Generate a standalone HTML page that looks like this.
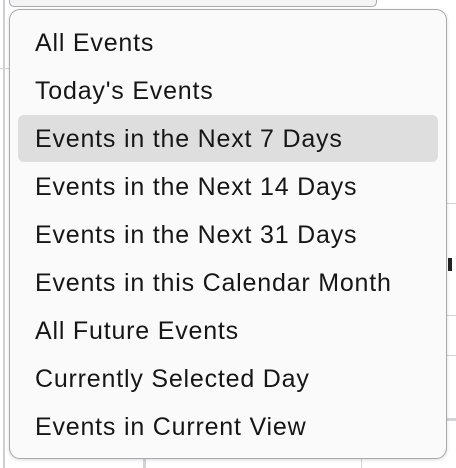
<!DOCTYPE html>
<html><head><meta charset="utf-8"><style>
html,body{margin:0;padding:0;width:456px;height:468px;overflow:hidden;background:#fff;font-family:"Liberation Sans",sans-serif;}
.bg{position:absolute;background:#d4d4d6;}
.menu{position:absolute;left:9px;top:9px;width:436px;height:448px;border:1px solid #a9a9ae;border-radius:11px;background:#fafafa;box-shadow:0 1px 3px rgba(0,0,0,.15);}
.item{position:absolute;left:8px;width:420px;height:47px;line-height:48px;padding-left:17px;box-sizing:border-box;font-size:25px;letter-spacing:0.8px;color:#161616;border-radius:6px;white-space:nowrap;}
.sel{background:#dedede;}
</style></head><body>
<div style="position:absolute;left:9px;top:-6px;width:366px;height:11px;border:1px solid #a9a9ae;border-radius:5px;background:#f4f4f4"></div>
<div class="bg" style="left:3px;top:0;width:2px;height:468px;background:#cfcfd2"></div>
<div class="bg" style="left:0;top:68px;width:9px;height:1px"></div>
<div class="bg" style="left:447px;top:203px;width:9px;height:1px"></div>
<div class="bg" style="left:447px;top:315px;width:9px;height:1px"></div>
<div class="bg" style="left:447px;top:355px;width:9px;height:1px"></div>
<div class="bg" style="left:447px;top:418px;width:9px;height:3px"></div>
<div class="bg" style="left:143px;top:458px;width:3px;height:10px"></div>
<div class="bg" style="left:361px;top:458px;width:1px;height:10px"></div>
<div style="position:absolute;left:448px;top:258px;width:4px;height:13px;background:#222"></div>
<div class="menu">
<div class="item" style="top:9px">All Events</div>
<div class="item" style="top:57px">Today's Events</div>
<div class="item sel" style="top:105px">Events in the Next 7 Days</div>
<div class="item" style="top:153px">Events in the Next 14 Days</div>
<div class="item" style="top:201px">Events in the Next 31 Days</div>
<div class="item" style="top:249px">Events in this Calendar Month</div>
<div class="item" style="top:297px">All Future Events</div>
<div class="item" style="top:345px">Currently Selected Day</div>
<div class="item" style="top:393px">Events in Current View</div>
</div>
</body></html>
